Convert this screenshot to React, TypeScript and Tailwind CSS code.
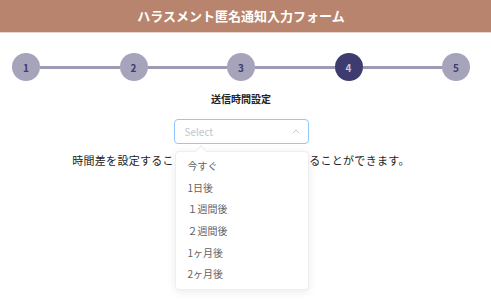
import React from 'react';

const steps = [1, 2, 3, 4, 5];
const options = ['今すぐ', '1日後', '１週間後', '２週間後', '1ヶ月後', '2ヶ月後'];

export default function App() {
  const active = 4;

  return (
    <div className="min-h-[300px] w-[491px] bg-white" style={{ fontFamily: '"Noto Sans CJK JP", "Noto Sans", sans-serif' }}>
      <header className="h-[33px] border-b border-[#e9d6cd] bg-[#b9846d]">
        <div className="flex h-[32px] w-[482px] items-center justify-center">
          <h1 className="text-[13px] font-bold text-white">ハラスメント匿名通知入力フォーム</h1>
        </div>
      </header>

      <div className="w-[482px]">
        <div className="mt-[20px] flex items-center px-3">
          {steps.map((n, i) => (
            <React.Fragment key={n}>
              {i > 0 && <div className="h-[3px] flex-1 bg-[#9d9bb3]" />}
              <div
                className={`flex h-[28px] w-[28px] shrink-0 items-center justify-center rounded-full text-[10px] font-semibold ${
                  n === active ? 'bg-[#3e3c6f] text-[#c9c8dc]' : 'bg-[#a6a4ba] text-[#3e3c6f]'
                }`}
              >
                {n}
              </div>
            </React.Fragment>
          ))}
        </div>

        <div className="mt-[11px] flex flex-col items-center">
          <div className="text-[10px] font-bold leading-[14px] text-[#222]">送信時間設定</div>

          <div className="relative mt-[13px]">
            <div className="flex h-[25px] w-[135px] items-center justify-between rounded-[4px] border border-[#93c7fb] bg-white pl-[10px] pr-[8px]">
              <span className="text-[10px] text-[#c0c4cc]">Select</span>
              <svg width="8" height="5" viewBox="0 0 8 5" fill="none">
                <path d="M1 4.2 L4 1 L7 4.2" stroke="#c0c4cc" strokeWidth="1" />
              </svg>
            </div>

            <div className="absolute left-[1px] top-[32px] z-10 w-[134px] rounded-[4px] border border-[#eceef2] bg-white pb-[4px] pt-[3px] shadow-[0_2px_10px_rgba(0,0,0,0.08)]">
              <div className="absolute -top-[5px] left-[21px] h-[8px] w-[8px] rotate-45 border-l border-t border-[#eceef2] bg-white" />
              {options.map((o) => (
                <div key={o} className="flex h-[21.6px] items-center px-[12px] text-[10px] text-[#606266]">
                  {o}
                </div>
              ))}
            </div>
          </div>

          <p className="mt-[9px] text-[11px] leading-[14px] tracking-[0.3px] text-[#222]">
            時間差を設定することで匿名性を高めて送信することができます。
          </p>
        </div>
      </div>
    </div>
  );
}
